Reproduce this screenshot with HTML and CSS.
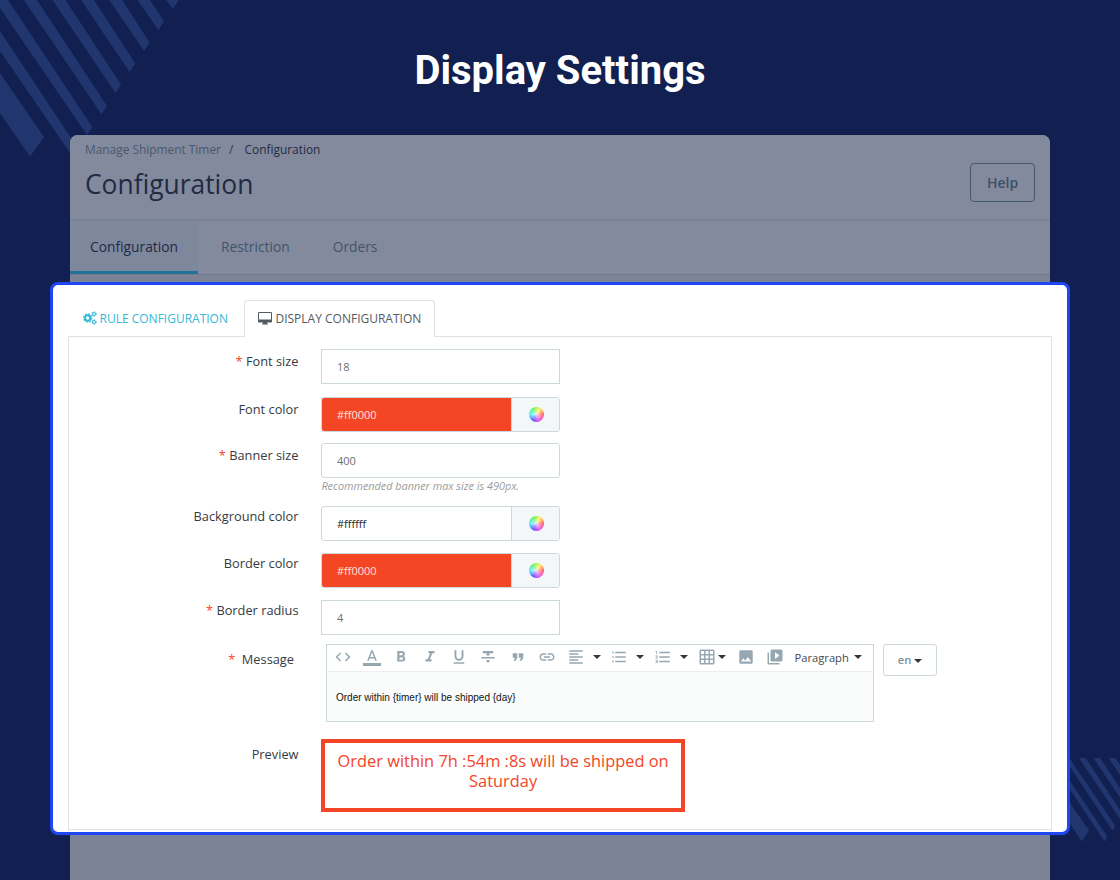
FILE: index.html
```html
<!DOCTYPE html>
<html lang="en">
  <head>
    <meta charset="UTF-8" />
    <meta name="viewport" content="width=device-width, initial-scale=1.0" />
    <title>Display Settings</title>
    <link rel="stylesheet" href="styles.css" />
  </head>
  <body>
    <svg class="stripes" viewBox="0 0 1120 880" width="1120" height="880">
      <path d="M0 73L44 137 30 156.500 0 113z" />
      <path d="M0 31L78 148.500 72.500 156.500 0 51z" />
      <path d="M0 0H8L92.300 127 87 135 0 8z" />
      <path d="M24 0H37L107 106 101.300 114z" />
      <path d="M52.500 0H65.500L121 84.500 115.500 93z" />
      <path d="M81 0H94L135.300 63.500 129.700 72z" />
      <path d="M109.300 0H122L149.700 42.500 144 51z" />
      <path d="M137.500 0H150L164 21.300 158.300 30z" />
      <path d="M166 0H178.500L173 9z" />
      <path d="M1066 797L1089 830.500 1082 841.500 1066 818z" />
      <path d="M1066 775L1107.500 837 1104.500 841.500 1066 783.500z" />
      <path d="M1066 753L1115.300 826 1112.500 830.500 1066 761z" />
      <path d="M1079 758H1085.500L1120 810V819z" />
      <path d="M1093.500 758H1100L1120 788V797.500z" />
      <path d="M1108.500 758H1115.300L1120 765V775z" />
    </svg>

    <h1 class="title">Display Settings</h1>

    <main class="page">
      <header class="header">
        <div>
          <nav class="breadcrumb">
            Manage Shipment Timer <span class="slash">/</span>
            <b>Configuration</b>
          </nav>
          <h2>Configuration</h2>
        </div>
        <button class="help">Help</button>
      </header>
      <nav class="page-tabs">
        <a class="active">Configuration</a>
        <a>Restriction</a>
        <a>Orders</a>
      </nav>
    </main>

    <section class="panel">
      <nav class="tabs">
        <a class="tab">
          <svg width="14" height="14" viewBox="0 0 14 14" fill="none" stroke="currentColor">
            <circle cx="4.700" cy="7" r="2.700" stroke-width="2" />
            <circle cx="4.700" cy="7" r="4" stroke-width="1.400" stroke-dasharray="1.650 1.492" />
            <circle cx="11" cy="3" r="1.500" stroke-width="1.100" />
            <circle cx="11" cy="3" r="2.300" stroke-width=".9" stroke-dasharray="1.200 1.209" />
            <circle cx="11" cy="11" r="1.500" stroke-width="1.100" />
            <circle cx="11" cy="11" r="2.300" stroke-width=".9" stroke-dasharray="1.200 1.209" />
          </svg>
          RULE CONFIGURATION
        </a>
        <a class="tab active">
          <svg width="14" height="13" viewBox="0 0 14 13" fill="currentColor">
            <path d="M1 0h12q1 0 1 1v8.500q0 1-1 1H9V11.500h1v1H4v-1h1v-1H1q-1 0-1-1V1q0-1 1-1zM1 1v6.500h12V1z" fill-rule="evenodd" />
          </svg>
          DISPLAY CONFIGURATION
        </a>
      </nav>

      <form class="form">
        <div class="row">
          <label><i>*</i> Font size</label>
          <div class="input">18</div>
        </div>
        <div class="row short">
          <label>Font color</label>
          <div class="input color red">
            <span>#ff0000</span>
            <div class="picker"><div class="wheel"></div></div>
          </div>
        </div>
        <div class="row">
          <label><i>*</i> Banner size</label>
          <div>
            <div class="input rounded">400</div>
            <p class="hint">Recommended banner max size is 490px.</p>
          </div>
        </div>
        <div class="row mid">
          <label>Background color</label>
          <div class="input color">
            <span>#ffffff</span>
            <div class="picker"><div class="wheel"></div></div>
          </div>
        </div>
        <div class="row mid">
          <label>Border color</label>
          <div class="input color red">
            <span>#ff0000</span>
            <div class="picker"><div class="wheel"></div></div>
          </div>
        </div>
        <div class="row last">
          <label><i>*</i> Border radius</label>
          <div class="input">4</div>
        </div>

        <div class="row message">
          <label><i>*</i>&nbsp; Message</label>
          <div class="editor">
            <div class="toolbar">
              <span class="tool"><svg viewBox="0 0 24 24"><path d="M9.400 16.600L4.800 12l4.600-4.600L8 6l-6 6 6 6 1.400-1.400zm5.200 0l4.600-4.600-4.600-4.600L16 6l6 6-6 6-1.400-1.400z" /></svg></span>
              <span class="tool"><svg viewBox="0 0 24 24"><path d="M0 20h24v4H0zM11 3L5.500 17h2.250l1.120-3h6.250l1.120 3h2.250L13 3h-2zm-1.380 9L12 5.670 14.380 12H9.620z" /></svg></span>
              <span class="tool"><svg viewBox="0 0 24 24"><path d="M15.600 10.790c.97-.67 1.650-1.770 1.650-2.790 0-2.260-1.750-4-4-4H7v14h7.040c2.090 0 3.710-1.700 3.710-3.790 0-1.520-.86-2.820-2.150-3.420zM10 6.500h3c.83 0 1.500.67 1.500 1.500s-.67 1.500-1.500 1.500h-3v-3zm3.500 9H10v-3h3.500c.83 0 1.500.67 1.500 1.500s-.67 1.500-1.500 1.500z" /></svg></span>
              <span class="tool"><svg viewBox="0 0 24 24"><path d="M10 4v3h2.210l-3.420 8H6v3h8v-3h-2.210l3.420-8H18V4z" /></svg></span>
              <span class="tool"><svg viewBox="0 0 24 24"><path d="M12 17c3.310 0 6-2.690 6-6V3h-2.500v8c0 1.930-1.570 3.500-3.500 3.500S8.500 12.930 8.500 11V3H6v8c0 3.310 2.690 6 6 6zm-7 2v2h14v-2H5z" /></svg></span>
              <span class="tool"><svg viewBox="0 0 24 24"><path d="M10 19h4v-3h-4v3zM5 4v3h5v3h4V7h5V4H5zM3 14h18v-2H3v2z" /></svg></span>
              <span class="tool"><svg viewBox="0 0 24 24"><path d="M6 17h3l2-4V7H5v6h3zm8 0h3l2-4V7h-6v6h3z" /></svg></span>
              <span class="tool"><svg viewBox="0 0 24 24"><path d="M3.900 12c0-1.710 1.390-3.100 3.100-3.100h4V7H7c-2.760 0-5 2.240-5 5s2.240 5 5 5h4v-1.900H7c-1.710 0-3.100-1.390-3.100-3.100zM8 13h8v-2H8v2zm9-6h-4v1.900h4c1.710 0 3.100 1.390 3.100 3.100s-1.390 3.100-3.100 3.100h-4V17h4c2.760 0 5-2.240 5-5s-2.240-5-5-5z" /></svg></span>
              <span class="tool drop"><svg viewBox="0 0 24 24"><path d="M15 15H3v2h12v-2zm0-8H3v2h12V7zM3 13h18v-2H3v2zm0 8h18v-2H3v2zM3 3v2h18V3H3z" /></svg><i class="caret"></i></span>
              <span class="tool drop"><svg viewBox="0 0 24 24"><path d="M7 5h14v2H7zM7 11h14v2H7zM7 17h14v2H7zM3 5h2v2H3zM3 11h2v2H3zM3 17h2v2H3z" /></svg><i class="caret"></i></span>
              <span class="tool drop"><svg viewBox="0 0 24 24"><path d="M2 17h2v.5H3v1h1v.5H2v1h3v-4H2v1zm1-9h1V4H2v1h1v3zm-1 3h1.800L2 13.100v.9h3v-1H3.200L5 10.900V10H2v1zm5-6v2h14V5H7zm0 14h14v-2H7v2zm0-6h14v-2H7v2z" /></svg><i class="caret"></i></span>
              <span class="tool drop tight"><svg viewBox="0 0 24 24"><path d="M20 2H4c-1.100 0-2 .9-2 2v16c0 1.100.9 2 2 2h16c1.100 0 2-.9 2-2V4c0-1.100-.9-2-2-2zM8 20H4v-4h4v4zm0-6H4v-4h4v4zm0-6H4V4h4v4zm6 12h-4v-4h4v4zm0-6h-4v-4h4v4zm0-6h-4V4h4v4zm6 12h-4v-4h4v4zm0-6h-4v-4h4v4zm0-6h-4V4h4v4z" /></svg><i class="caret"></i></span>
              <span class="tool"><svg viewBox="0 0 24 24"><path d="M21 19V5c0-1.100-.9-2-2-2H5c-1.100 0-2 .9-2 2v14c0 1.100.9 2 2 2h14c1.100 0 2-.9 2-2zM8.500 13.500l2.500 3.010L14.500 12l4.500 6H5l3.500-4.500z" /></svg></span>
              <span class="tool"><svg viewBox="0 0 24 24"><path d="M4 6H2v14c0 1.100.9 2 2 2h14v-2H4V6zm16-4H8c-1.100 0-2 .9-2 2v12c0 1.100.9 2 2 2h12c1.100 0 2-.9 2-2V4c0-1.100-.9-2-2-2zm-8 12.500v-9l6 4.500-6 4.500z" /></svg></span>
              <span class="format">Paragraph <i class="caret"></i></span>
            </div>
            <div class="editor-body">Order within {timer} will be shipped {day}</div>
          </div>
          <div class="lang">en <i class="caret"></i></div>
        </div>

        <div class="row">
          <label class="preview-label">Preview</label>
          <div class="preview">Order within 7h :54m :8s will be shipped on Saturday</div>
        </div>
      </form>
    </section>
  </body>
</html>
```
FILE: styles.css
```css
* {
  box-sizing: border-box;
}

body {
  position: relative;
  margin: 0;
  width: 1120px;
  height: 880px;
  overflow: hidden;
  display: flex;
  flex-direction: column;
  background: #112050;
  font-family: "Open Sans", "Noto Sans", sans-serif;
  color: #363a41;
}

.stripes {
  position: absolute;
  top: 0;
  left: 0;
  fill: #21356e;
}

.title {
  position: relative;
  margin: 0;
  height: 135px;
  padding-top: 47px;
  font: bold 40px/48px Roboto, sans-serif;
  text-align: center;
  color: #fff;
}

/* dimmed page behind the panel */
.page {
  position: relative;
  flex: 1;
  margin: 0 70px;
  border-radius: 8px 8px 0 0;
  background: #7c8396;
  overflow: hidden;
}

.header {
  display: flex;
  justify-content: space-between;
  height: 86px;
  padding: 5px 15px 0;
  background: #848a9d;
  border-bottom: 2px solid #7b8295;
}

.breadcrumb {
  font-size: 11.9px;
  line-height: 18px;
  color: #4a586f;
}

.breadcrumb b {
  font-weight: normal;
  color: #1f2a44;
}

.slash {
  margin: 0 8px 0 5px;
  color: #2f3a52;
}

.header h2 {
  margin: 8px 0 0;
  font-size: 26.4px;
  line-height: 36px;
  font-weight: normal;
  color: #1f2a44;
}

.help {
  width: 65px;
  height: 39px;
  margin-top: 23px;
  padding: 0;
  border: 1px solid #445872;
  border-radius: 4px;
  background: none;
  font: 600 14px "Open Sans", sans-serif;
  color: #3b5069;
}

.page-tabs {
  display: flex;
  height: 54px;
  background: #848a9d;
  border-bottom: 1px solid #747b8f;
}

.page-tabs a {
  padding: 0 20px;
  margin-right: 3px;
  font-size: 13.8px;
  line-height: 51px;
  color: #40546e;
}

.page-tabs .active {
  background: #7e889d;
  border-bottom: 3px solid #217399;
  color: #1f2a44;
}

.panel {
  position: absolute;
  top: 282px;
  left: 50px;
  width: 1020px;
  height: 553px;
  padding: 15px 15px 0;
  border: 3px solid #1f46f5;
  border-radius: 8px;
  background: #fff;
}

.tabs {
  display: flex;
  height: 36px;
}

.tab {
  display: flex;
  align-items: center;
  gap: 3px;
  height: 36px;
  padding: 0 13.5px 0 14.5px;
  font-size: 12px;
  color: #34b9d8;
}

.tab.active {
  position: relative;
  height: 37px;
  margin-left: 3px;
  padding: 0 13px 2px;
  border: 1px solid #dfe1e2;
  border-bottom: 0;
  border-radius: 4px 4px 0 0;
  background: #fff;
  color: #555a5f;
}

.form {
  height: 494px;
  padding-top: 12px;
  border: 1px solid #dfe1e2;
}

.row {
  display: flex;
  margin-bottom: 13px;
}

.row.short {
  margin-bottom: 11px;
}

.row.mid {
  margin-bottom: 12px;
}

.row.last {
  margin-bottom: 9px;
}

.row label {
  width: 229.5px;
  margin-right: 22.9px;
  padding-top: 2.5px;
  text-align: right;
  font-size: 12.8px;
  line-height: 18px;
}

.row.mid label,
.row.last label {
  padding-top: 2px;
  line-height: 17px;
}

.row label i {
  font-style: normal;
  color: #f44525;
}

.input {
  width: 239px;
  height: 35px;
  padding: 0 14.5px;
  border: 1px solid #cbd9de;
  font-size: 11px;
  line-height: 34px;
  color: #6c6f72;
}

.rounded {
  border-radius: 3px;
}

.color {
  display: flex;
  padding: 0;
  border-radius: 3px;
  overflow: hidden;
  color: #25282c;
}

.color span {
  flex: 1;
  padding-left: 14.5px;
}

.red span {
  background: #f44525;
  color: #fde3dd;
}

.picker {
  display: flex;
  align-items: center;
  justify-content: center;
  width: 48px;
  padding-left: 2px;
  border-left: 1px solid #cbd9de;
  background: #f4f7f8;
}

.wheel {
  width: 15px;
  height: 15px;
  border-radius: 50%;
  background:
    radial-gradient(rgba(255, 255, 255, 0.8), rgba(255, 255, 255, 0.1) 70%),
    conic-gradient(from 90deg, #f44, #e3e, #43f, #3ef, #4e4, #fe3, #f44);
}

.hint {
  margin: 0;
  height: 15px;
  font-size: 10.85px;
  line-height: 16px;
  font-style: italic;
  color: #9b9b9b;
}

.row.message {
  margin-bottom: 17px;
}

.row.message label {
  width: 225px;
  margin-right: 32px;
  padding-top: 6px;
}

.editor {
  width: 548px;
  height: 78px;
  border: 1px solid #cbd9de;
  background: #fafcfc;
}

.toolbar {
  display: flex;
  height: 27px;
  padding: 0 0 2px 1.5px;
  border-bottom: 1px solid #eceeef;
  background: #fff;
}

.tool {
  display: flex;
  align-items: center;
  width: 29.1px;
  padding-left: 5.5px;
}

.tool svg {
  flex: none;
  width: 18px;
  height: 18px;
  fill: #95a8b1;
}

.tool.drop {
  width: 43.6px;
}

.tool.tight {
  width: 39.3px;
}

.caret {
  border: 4px solid transparent;
  border-top-color: #33363a;
  border-bottom: 0;
}

.drop .caret {
  margin-left: 8px;
}

.tight .caret {
  margin-left: 2.5px;
}

.format {
  display: flex;
  align-items: center;
  gap: 5px;
  padding-left: 5px;
  font-size: 11.2px;
  color: #45494e;
}

.editor-body {
  padding: 16.5px 9px;
  font: 10px/18px "Liberation Sans", Arial, sans-serif;
  color: #111;
}

.lang {
  display: flex;
  align-items: center;
  justify-content: center;
  gap: 3px;
  width: 54px;
  height: 32px;
  margin-left: 9px;
  padding-bottom: 1px;
  border: 1px solid #cbd9de;
  border-radius: 3px;
  font-size: 11.2px;
  font-weight: 600;
  color: #7d929d;
}

.lang .caret {
  margin-top: 2px;
}

.row .preview-label {
  padding-top: 6px;
}

.preview {
  width: 363.5px;
  height: 73px;
  padding: 8px 10px;
  border: 4px solid #f44525;
  font-size: 16.4px;
  line-height: 20px;
  text-align: center;
  color: #f44525;
}
```
